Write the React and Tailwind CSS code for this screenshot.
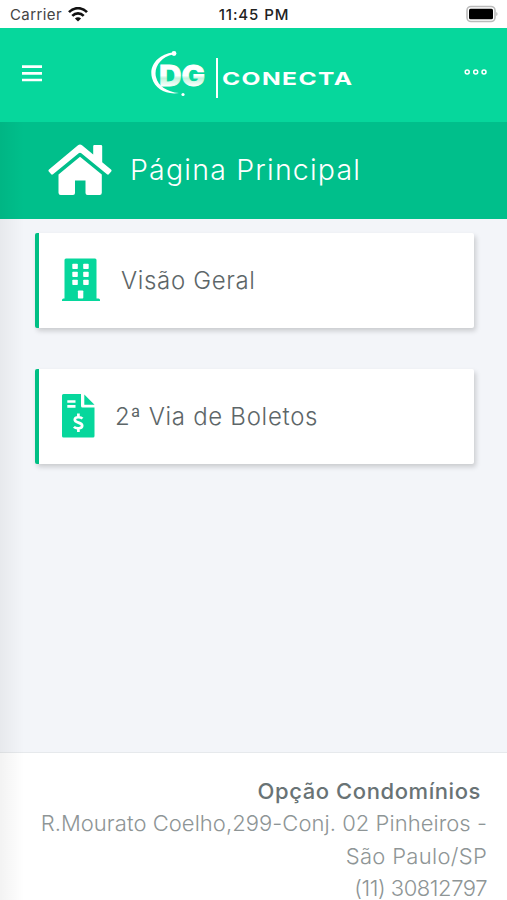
import React from 'react';

const HomeIcon = () => (
    <svg width="64" height="52" viewBox="0 0 64 52" fill="#fff" className="-mt-[2px]">
        <path d="M30 1.200Q32 -.2 34 1.200L45.200 10.600V2.200Q45.200 1 46.400 1H53Q54.200 1 54.200 2.200V18.200L63 25.500Q64 26.400 63.200 27.400L61 30.100Q60.100 31.100 59 30.200L33.300 9.300Q32 8.300 30.700 9.300L5 30.200Q3.900 31.100 3 30.100L.8 27.400Q0 26.400 1 25.500z" />
        <path d="M32 12.800 53.800 30.400V48.800Q53.800 51 51.600 51H39.500Q37.500 51 37.500 49V36.500H27V49Q27 51 25 51H12.700Q10.500 51 10.500 48.800V30.400z" />
    </svg>
);

const BuildingIcon = () => (
    <svg width="38" height="43" viewBox="0 0 38 43" className="-mt-[2px]">
        <path d="M2.500 2Q2.500.5 4 .5H33Q34.500.5 34.500 2V40.500H36.500Q38 40.500 38 42V43H0V42Q0 40.500 1.500 40.500H2.500z" fill="#06d79c" />
        <g fill="#fff">
            <rect x="10.300" y="5.700" width="5.500" height="5.400" rx="0.800" />
            <rect x="21.200" y="5.700" width="5.500" height="5.400" rx="0.800" />
            <rect x="10.300" y="13.700" width="5.500" height="5.400" rx="0.800" />
            <rect x="21.200" y="13.700" width="5.500" height="5.400" rx="0.800" />
            <rect x="10.300" y="21.700" width="5.500" height="5.400" rx="0.800" />
            <rect x="21.200" y="21.700" width="5.500" height="5.400" rx="0.800" />
            <rect x="15.900" y="32.500" width="5.400" height="8" rx="0.800" />
        </g>
    </svg>
);

const InvoiceIcon = () => (
    <svg width="33" height="44" viewBox="0 0 33 44" className="-mt-[2px]">
        <path d="M1.500 0H19V12Q19 13.500 20.500 13.500H32.500V42Q32.500 43.500 31 43.500H1.500Q0 43.500 0 42V1.500Q0 0 1.500 0zM22.300 .5 32.500 10.700H22.300z" fill="#06d79c" />
        <path d="M5.300 7.500H13.500M5.300 12.400H13.500" stroke="#fff" strokeWidth="2.600" />
        <path d="M20.400 24.600C19 22.900 12.800 22.400 12.800 25.700 12.800 29.200 20.200 28 20.200 31.700 20.200 35.100 13.800 34.800 11.900 32.900M16.400 19.400V23M16.400 34.300V38" fill="none" stroke="#fff" strokeWidth="2.700" />
    </svg>
);

const StatusBar = () => (
    <div className="h-7 shrink-0 bg-white px-[10px] grid grid-cols-3 items-center text-[#222] text-[15px]">
        <div className="flex items-center gap-[6px]">
            <span className="text-[#444] tracking-[0.4px] leading-none pt-[1px]">Carrier</span>
            <svg width="20" height="15" viewBox="0 0 20 15" fill="none" stroke="#111" strokeWidth="2.6">
                <path d="M1 5.2C6-.2 14-.2 19 5.2" />
                <path d="M4.3 8.8c3.2-3.3 8.2-3.3 11.4 0" />
                <path d="M10 14.6 6.9 11.5c1.7-1.6 4.5-1.6 6.2 0z" fill="#111" stroke="none" />
            </svg>
        </div>
        <span className="text-center font-medium tracking-[0.9px] whitespace-nowrap leading-none pt-[1px] pl-[1px]">11:45 PM</span>
        <svg className="justify-self-end -mr-[1px]" width="32" height="18" viewBox="0 0 32 18">
            <rect x="1" y="1.5" width="28" height="15" rx="4" fill="#fff" stroke="#bbb" strokeWidth="1.6" />
            <rect x="3" y="3.8" width="24" height="10.4" rx="1.5" fill="#000" />
            <path d="M30.4 7v4c1.4-.5 1.4-3.5 0-4z" fill="#aaa" />
        </svg>
    </div>
);

const Logo = () => (
    <svg width="210" height="54" viewBox="0 0 210 54" fill="#fff" className="ml-[2px] -mt-[2px]">
        <defs>
            <linearGradient id="dg" x1="0" y1="0" x2="0" y2="1">
                <stop offset="0.5" stopColor="#fff" />
                <stop offset="0.58" stopColor="#c2f3dd" />
                <stop offset="0.82" stopColor="#fff" />
            </linearGradient>
        </defs>
        <path d="M24 5.500C10 7-.5 18 3 31c3 11 14 17 27 15C18 45 9 39 7 30 4.500 20 12 10 24 7.500z" />
        <circle cx="25" cy="6.500" r="2.400" />
        <circle cx="34" cy="47.500" r="1.600" />
        <text x="10" y="38.500" fontSize="28" fontWeight="800" fontFamily="Inter, sans-serif" textLength="46" lengthAdjust="spacingAndGlyphs" fill="url(#dg)" stroke="url(#dg)" strokeWidth="0.900">DG</text>
        <rect x="67" y="11" width="2" height="40" />
        <text x="73" y="38" fontSize="17.500" fontWeight="700" fontFamily="Inter, sans-serif" letterSpacing="1" textLength="131.500" lengthAdjust="spacingAndGlyphs">CONECTA</text>
    </svg>
);

const Header = () => (
    <header className="h-[94px] shrink-0 bg-[#06d79c] px-[22px] flex items-center justify-between">
        <svg width="20" height="17" viewBox="0 0 20 17" className="-mt-[4px]">
            <path d="M0 1.6h20M0 8.3h20M0 15h20" stroke="#fff" strokeWidth="2.700" />
        </svg>
        <Logo />
        <svg width="24" height="8" viewBox="0 0 24 8" fill="none" stroke="#fff" strokeWidth="1.500" className="-mt-[7px] -mr-[3px]">
            <circle cx="3.200" cy="4" r="2" />
            <circle cx="11.700" cy="4" r="2" />
            <circle cx="20" cy="4" r="2" />
        </svg>
    </header>
);

const MenuCard = ({ children }) => (
    <button className="h-[95px] w-[439px] flex items-center pl-[23px] bg-white border-l-4 border-[#00bf84] rounded-[2px] shadow-[2px_3px_5px_rgba(0,0,0,0.17)] text-[#5d6668] text-[24px] font-[350]">
        {children}
    </button>
);

const App = () => {
    return (
        <div className="relative h-[900px] w-full flex flex-col overflow-hidden bg-[#f3f5f9] font-['Inter',sans-serif]">
            <StatusBar />
            <Header />
            <div className="h-[97px] shrink-0 bg-[#00bf8b] flex items-center pl-12 gap-[18px] text-white">
                <HomeIcon />
                <h1 className="text-[28.5px] font-[350] tracking-[1.2px] leading-none whitespace-nowrap">Página Principal</h1>
            </div>

            <main className="flex-1 min-h-0 pt-[14px] pl-[35px] flex flex-col gap-[41px]">
                <MenuCard>
                    <BuildingIcon />
                    <span className="ml-[21px] tracking-[0.65px]">Visão Geral</span>
                </MenuCard>
                <MenuCard>
                    <InvoiceIcon />
                    <span className="ml-[20px] tracking-[0.7px]">2ª Via de Boletos</span>
                </MenuCard>
            </main>

            <footer className="h-[148px] shrink-0 bg-white border-t border-[#e6e9ec] pt-[22px] pr-5 text-right text-[#8e9596] text-[22px] leading-[32.4px] font-light whitespace-nowrap">
                <p className="text-[#697375] font-medium pr-[6px] tracking-[0.58px]">Opção Condomínios</p>
                <p className="tracking-[0.05px]">R.Mourato Coelho,299-Conj. 02 Pinheiros -</p>
                <p className="tracking-[0.3px]">São Paulo/SP</p>
                <p className="-tracking-[0.45px]">(11) 30812797</p>
            </footer>

            {/* side menu shadow along the left edge */}
            <div className="absolute left-0 top-[122px] bottom-0 w-6 bg-linear-to-r from-black/5 to-transparent pointer-events-none" />
        </div>
    );
};

export default App;
